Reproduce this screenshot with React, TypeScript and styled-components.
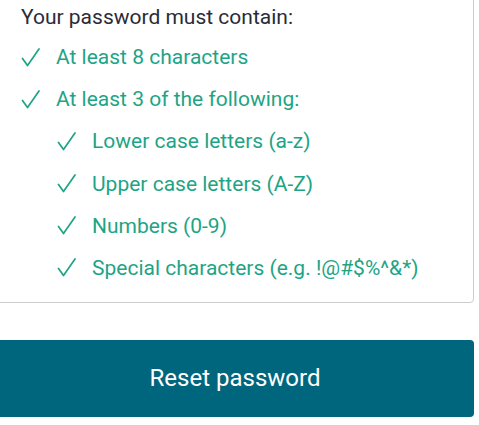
import styled, { createGlobalStyle } from "styled-components";

const GlobalStyle = createGlobalStyle`
	html, body {
		margin: 0;
		padding: 0;
		background: #ffffff;
		font-family: Roboto, "Liberation Sans", sans-serif;
		overflow: hidden;
	}
`;

const rules = [
	{ text: "At least 8 characters", nested: false },
	{ text: "At least 3 of the following:", nested: false },
	{ text: "Lower case letters (a-z)", nested: true },
	{ text: "Upper case letters (A-Z)", nested: true },
	{ text: "Numbers (0-9)", nested: true },
	{ text: "Special characters (e.g. !@#$%^&*)", nested: true },
];

const CheckIcon = () => (
	<svg width='19' height='19' viewBox='0 0 19 19' fill='none'>
		<path
			d='M1.5 10.5 L6.5 17.5 L18 1'
			stroke='currentColor'
			strokeWidth='1.7'
			strokeLinecap='round'
			strokeLinejoin='round'
		/>
	</svg>
);

function App() {
	return (
		<>
			<GlobalStyle />
			<Page>
				<Card>
					<Heading>Your password must contain:</Heading>
					<RuleList>
						{rules.map((rule) => (
							<Rule key={rule.text} $nested={rule.nested}>
								<Check>
									<CheckIcon />
								</Check>
								<span>{rule.text}</span>
							</Rule>
						))}
					</RuleList>
				</Card>
				<ResetButton type='button'>Reset password</ResetButton>
			</Page>
		</>
	);
}

const Page = styled.div`
	display: flex;
	flex-direction: column;
	width: 494px;
	margin: -20px 0 0 -20px;
`;

const Card = styled.div`
	display: flex;
	flex-direction: column;
	gap: 16px;
	padding: 24px 20px 22px 40px;
	border: 1px solid #cccccc;
	border-radius: 4px;
`;

const Heading = styled.div`
	font-size: 21px;
	line-height: 24px;
	color: #2b2b38;
`;

const RuleList = styled.ul`
	display: flex;
	flex-direction: column;
	gap: 18.2px;
	margin: 0;
	padding: 0;
	list-style: none;
`;

const Rule = styled.li<{ $nested: boolean }>`
	display: flex;
	align-items: center;
	padding-left: ${(p) => (p.$nested ? "36px" : "0")};
	font-size: 21px;
	line-height: 24px;
	color: #1ea485;
`;

const Check = styled.span`
	display: flex;
	align-items: center;
	width: 35px;
	height: 24px;
	flex: none;
`;

const ResetButton = styled.button`
	margin: 37px 0 0 16px;
	height: 77px;
	border: none;
	border-radius: 4px;
	background: #00667e;
	color: #ffffff;
	font-family: Roboto, "Liberation Sans", sans-serif;
	font-size: 24px;
	cursor: pointer;
`;

export default App;
